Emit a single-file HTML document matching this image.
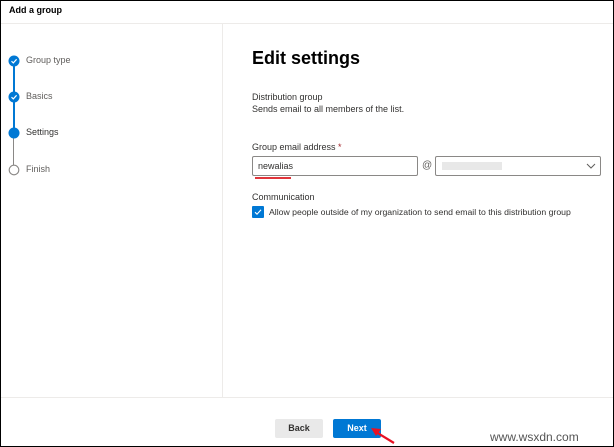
<!DOCTYPE html>
<html><head><style>
*{margin:0;padding:0;box-sizing:border-box}
body{width:614px;height:447px;background:#fff;font-family:"Liberation Sans",sans-serif;color:#323130;position:relative;overflow:hidden}
.frame{position:absolute;left:0;top:0;width:614px;height:447px;border:1px solid #000}
.abs{position:absolute}
.t{font-size:9px;white-space:nowrap}
</style></head><body>
<div class="frame"></div>
<div class="abs t" style="left:9px;top:5px;font-weight:bold;color:#000;font-size:9px">Add a group</div>
<div class="abs" style="left:1px;top:23px;width:612px;height:1px;background:#edebe9"></div>
<div class="abs" style="left:222px;top:24px;width:1px;height:373px;background:#edebe9"></div>
<div class="abs" style="left:1px;top:397px;width:612px;height:1px;background:#edebe9"></div>
<div class="abs" style="left:13px;top:64px;width:2px;height:30px;background:#0078d4"></div>
<div class="abs" style="left:13px;top:100px;width:2px;height:30px;background:#0078d4"></div>
<div class="abs" style="left:13px;top:137px;width:1px;height:30px;background:#8a8886"></div>
<svg class="abs" style="left:8px;top:55px" width="12" height="12"><circle cx="6" cy="6" r="5.5" fill="#0078d4"/><path d="M3.5 6.2l1.8 1.7 3.3-3.6" stroke="#fff" stroke-width="1.2" fill="none"/></svg>
<svg class="abs" style="left:8px;top:91px" width="12" height="12"><circle cx="6" cy="6" r="5.5" fill="#0078d4"/><path d="M3.5 6.2l1.8 1.7 3.3-3.6" stroke="#fff" stroke-width="1.2" fill="none"/></svg>
<svg class="abs" style="left:8px;top:127px" width="12" height="12"><circle cx="6" cy="6" r="5.5" fill="#0078d4"/></svg>
<svg class="abs" style="left:8px;top:164px" width="12" height="12"><circle cx="6" cy="6" r="4.8" fill="#fff" stroke="#8a8886" stroke-width="1.1"/></svg>
<div class="abs t" style="left:26px;top:55px;color:#605e5c">Group type</div>
<div class="abs t" style="left:26px;top:91px;color:#605e5c">Basics</div>
<div class="abs t" style="left:26px;top:127px;color:#323130">Settings</div>
<div class="abs t" style="left:26px;top:164px;color:#605e5c">Finish</div>
<div class="abs" style="left:252px;top:48px;font-size:18px;font-weight:bold;color:#000">Edit settings</div>
<div class="abs t" style="left:252px;top:92px">Distribution group</div>
<div class="abs t" style="left:252px;top:104px">Sends email to all members of the list.</div>
<div class="abs t" style="left:252px;top:142px">Group email address <span style="color:#a4262c">*</span></div>
<div class="abs" style="left:252px;top:156px;width:166px;height:20px;border:1px solid #8a8886;border-radius:2px"></div>
<div class="abs t" style="left:258px;top:161px">newalias</div>
<div class="abs" style="left:255px;top:177px;width:36px;height:2px;background:#e0353b"></div>
<div class="abs t" style="left:422px;top:160px;font-size:10px;color:#605e5c">@</div>
<div class="abs" style="left:435px;top:156px;width:166px;height:20px;border:1px solid #8a8886;border-radius:2px"></div>
<div class="abs" style="left:442px;top:162px;width:60px;height:8px;background:#e8e8e8"></div>
<svg class="abs" style="left:586px;top:162px" width="10" height="8"><path d="M1 2l4 4 4-4" stroke="#605e5c" fill="none"/></svg>
<div class="abs t" style="left:252px;top:192px">Communication</div>
<svg class="abs" style="left:252px;top:206px" width="12" height="12"><rect width="12" height="12" rx="1" fill="#0078d4"/><path d="M3 6.2l2 2 4-4.5" stroke="#fff" stroke-width="1.1" fill="none"/></svg>
<div class="abs t" style="left:269px;top:207px;font-size:8.7px">Allow people outside of my organization to send email to this distribution group</div>
<div class="abs" style="left:275px;top:419px;width:48px;height:19px;background:#e9e9e9;border-radius:2px;font-size:9px;text-align:center;line-height:19px;font-weight:bold;color:#323130">Back</div>
<div class="abs" style="left:333px;top:419px;width:48px;height:19px;background:#0078d4;border-radius:2px;font-size:9px;text-align:center;line-height:19px;font-weight:bold;color:#fff">Next</div>
<svg class="abs" style="left:368px;top:425px" width="30" height="20"><path d="M26 18L8 7" stroke="#e81123" stroke-width="2.2"/><path d="M3 3l10 1-5 7z" fill="#e81123"/></svg>
<div class="abs" style="left:490px;top:430px;font-size:12px;color:#555">www.wsxdn.com</div>
</body></html>
